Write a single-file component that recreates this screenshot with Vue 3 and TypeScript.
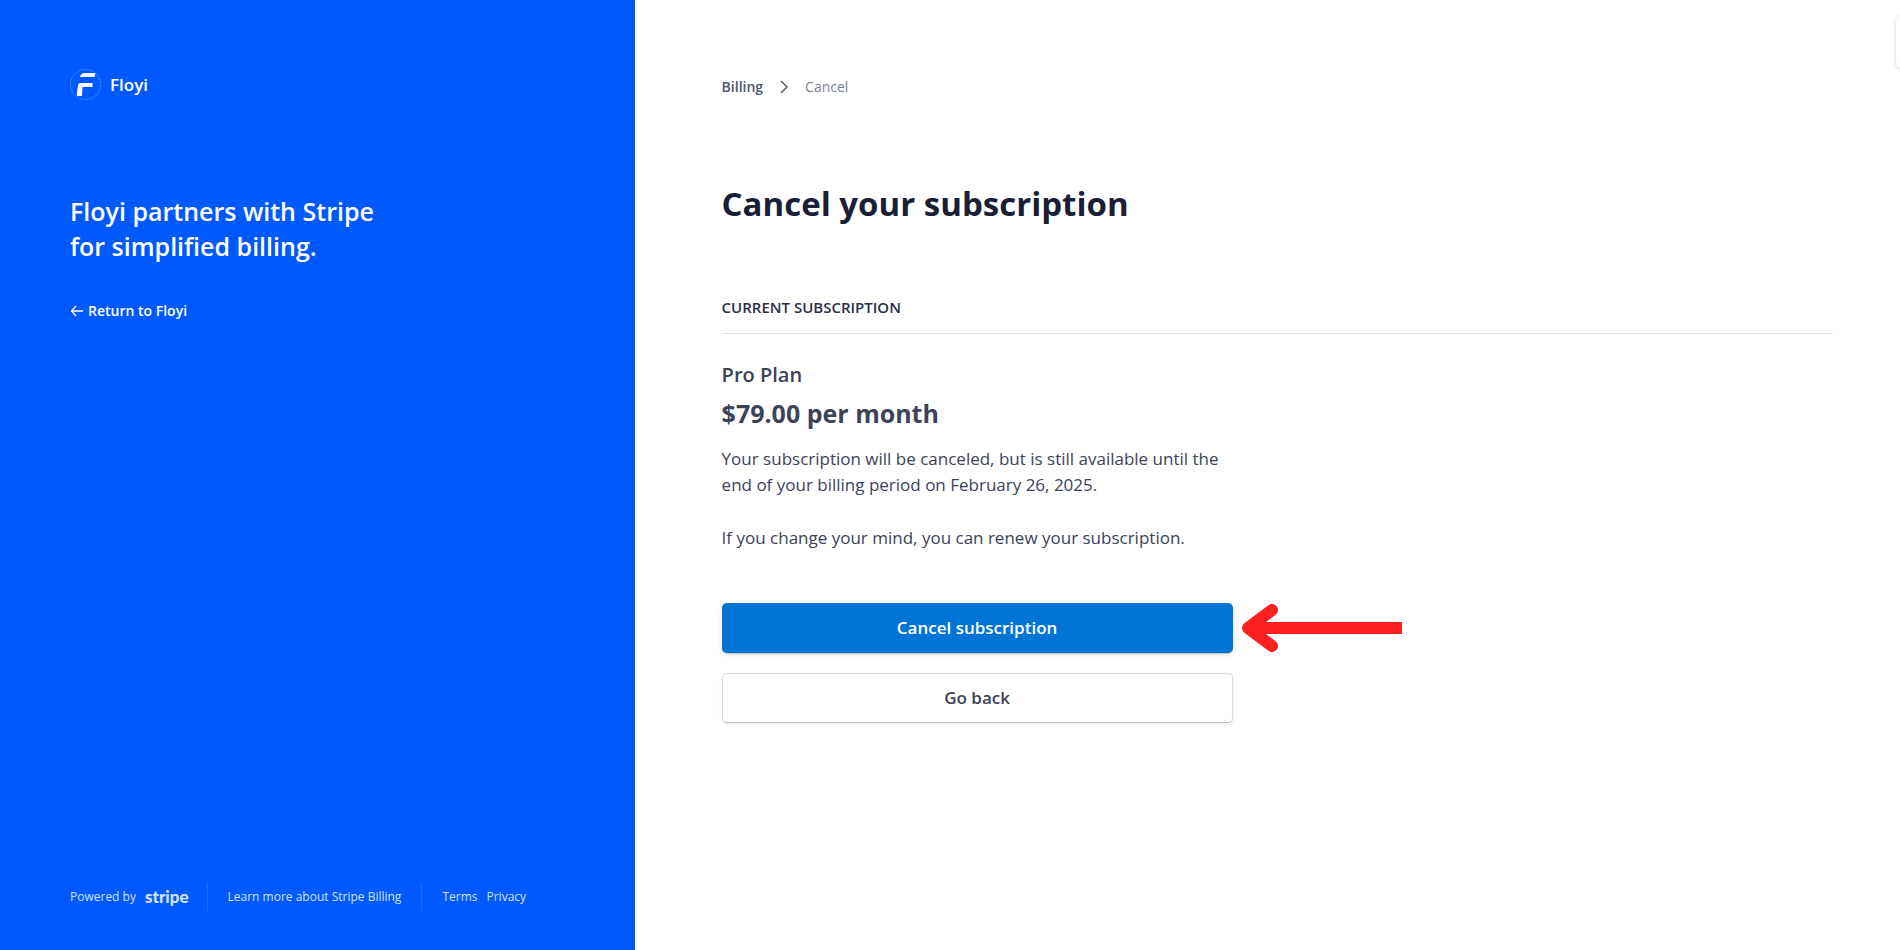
<script setup lang="ts">
const description: string[] = [
  'Your subscription will be canceled, but is still available until the end of your billing period on February 26, 2025.',
  'If you change your mind, you can renew your subscription.',
]
</script>

<template>
  <div class="page">
    <aside class="sidebar">
      <div class="brand">
        <svg class="brand-logo" viewBox="0 0 32 32" aria-hidden="true">
          <circle cx="15.500" cy="16.500" r="15" fill="none" stroke="#4d8dff" stroke-width="1" stroke-dasharray="2 1" />
          <path d="M14 5H25.500L24.500 9H9.800Q11 5.500 14 5Z" fill="#fff" />
          <path d="M10 15H22.500V19H12.500L12 28H7V24L8 17.500Q8.500 15.300 10 15Z" fill="#fff" />
        </svg>
        <span class="brand-name">Floyi</span>
      </div>
      <h2 class="tagline">Floyi partners with Stripe for simplified billing.</h2>
      <a class="return" href="#">
        <svg class="return-icon" viewBox="0 0 14 12" aria-hidden="true">
          <path d="M6 1L1.500 6L6 11M1.500 6H13" fill="none" stroke="#fff" stroke-width="1.300" />
        </svg>
        <span>Return to Floyi</span>
      </a>
      <footer class="footer">
        <a class="powered" href="#">Powered by <span class="stripe">stripe</span></a>
        <a class="learn" href="#">Learn more about Stripe Billing</a>
        <nav class="legal">
          <a href="#">Terms</a>
          <a href="#">Privacy</a>
        </nav>
      </footer>
    </aside>

    <main class="main">
      <nav class="crumbs" aria-label="Breadcrumb">
        <a class="crumb-link" href="#">Billing</a>
        <svg class="crumb-icon" viewBox="0 0 10 14" aria-hidden="true">
          <path d="M2 1L8 7L2 13" fill="none" stroke="#5f6579" stroke-width="1.600" />
        </svg>
        <span>Cancel</span>
      </nav>
      <h1 class="title">Cancel your subscription</h1>
      <h2 class="section-title">CURRENT SUBSCRIPTION</h2>
      <section class="plan">
        <h3 class="plan-name">Pro Plan</h3>
        <p class="price">$79.00 per month</p>
        <div class="description">
          <p v-for="text in description" :key="text">{{ text }}</p>
        </div>
        <div class="actions">
          <button class="button primary" type="button">Cancel subscription</button>
          <svg class="pointer" viewBox="0 0 160 50" aria-hidden="true">
            <path d="M160 25H12" fill="none" stroke="#ff1f1f" stroke-width="12" />
            <path d="M30 7L6 25L30 43" fill="none" stroke="#ff1f1f" stroke-width="12" stroke-linecap="round" stroke-linejoin="round" />
          </svg>
          <button class="button secondary" type="button">Go back</button>
        </div>
      </section>
    </main>
    <div class="edge-tab"></div>
  </div>
</template>

<style>
body {
  margin: 0;
}
</style>

<style scoped>
.page {
  position: relative;
  display: grid;
  grid-template-columns: 33.4% 1fr;
  min-height: 100vh;
  overflow: hidden;
  background: #fff;
  font-family: 'Segoe UI', 'Open Sans', 'Noto Sans', sans-serif;
}

h1,
h2,
h3,
p {
  margin: 0;
}

a {
  color: inherit;
  text-decoration: none;
}

.sidebar {
  display: flex;
  flex-direction: column;
  align-items: flex-start;
  box-sizing: border-box;
  padding: 68px 70px 39px;
  background: #0059ff;
  color: #fff;
}

.brand {
  display: flex;
  align-items: center;
  gap: 8px;
  height: 32px;
}

.brand-logo {
  width: 32px;
  height: 32px;
}

.brand-name {
  font-size: 17px;
  font-weight: 600;
}

.tagline {
  max-width: 320px;
  margin-top: 94px;
  font-size: 25px;
  font-weight: 600;
  line-height: 35px;
}

.return {
  display: flex;
  align-items: center;
  gap: 4px;
  margin-top: 35px;
  font-size: 14px;
  font-weight: 600;
  line-height: 24px;
}

.return-icon {
  width: 14px;
  height: 12px;
}

.footer {
  display: flex;
  align-items: center;
  margin-top: auto;
  color: #d2e2ff;
  font-size: 12px;
  line-height: 28px;
  white-space: nowrap;
}

.powered {
  display: flex;
  align-items: center;
  gap: 9px;
  padding-right: 18px;
  border-right: 1px solid #1f6dff;
}

.stripe {
  font-family: Lato, 'Open Sans', sans-serif;
  font-size: 17px;
  font-weight: 900;
}

.learn {
  padding: 0 20px;
  border-right: 1px solid #1f6dff;
}

.legal {
  display: flex;
  gap: 9px;
  padding-left: 20px;
}

.main {
  padding: 76px 67px 40px 87px;
  color: #3c4257;
}

.crumbs {
  display: flex;
  align-items: center;
  gap: 16px;
  color: #7b8194;
  font-size: 14px;
  line-height: 22px;
}

.crumb-link {
  color: #4f566b;
  font-weight: 600;
}

.crumb-icon {
  width: 10px;
  height: 14px;
}

.title {
  margin-top: 82px;
  color: #1a1f36;
  font-size: 33px;
  font-weight: 700;
  line-height: 48px;
}

.section-title {
  margin-top: 67px;
  padding-bottom: 14px;
  border-bottom: 1px solid #e0e1e5;
  color: #2a2f45;
  font-size: 15px;
  font-weight: 600;
  line-height: 24px;
}

.plan {
  max-width: 511px;
  padding-top: 25px;
}

.plan-name {
  font-size: 20px;
  font-weight: 600;
  line-height: 32px;
}

.price {
  margin-top: 4px;
  font-size: 25px;
  font-weight: 700;
  line-height: 36px;
}

.description {
  display: grid;
  gap: 27px;
  margin-top: 15px;
  font-size: 17px;
  line-height: 26px;
}

.actions {
  position: relative;
  display: grid;
  gap: 20px;
  margin-top: 52px;
}

.button {
  height: 50px;
  padding: 0 16px 2px;
  border: 0;
  border-radius: 5px;
  font-family: inherit;
  font-size: 17px;
  font-weight: 600;
  cursor: pointer;
}

.primary {
  background: #0074d4;
  box-shadow: 0 1px 1px rgba(0, 0, 0, 0.2), 0 2px 5px rgba(60, 66, 87, 0.12);
  color: #fff;
}

.secondary {
  border: 1px solid #d9dbe4;
  border-bottom-color: #b9bcc9;
  background: #fff;
  box-shadow: 0 2px 4px rgba(60, 66, 87, 0.08);
  color: #3c4257;
}

.pointer {
  position: absolute;
  top: 0;
  left: calc(100% + 9px);
  width: 160px;
  height: 50px;
}

.edge-tab {
  position: absolute;
  top: 16px;
  right: -12px;
  width: 16px;
  height: 52px;
  border-radius: 6px;
  background: #fff;
  box-shadow: 0 1px 4px rgba(60, 66, 87, 0.25);
}
</style>
